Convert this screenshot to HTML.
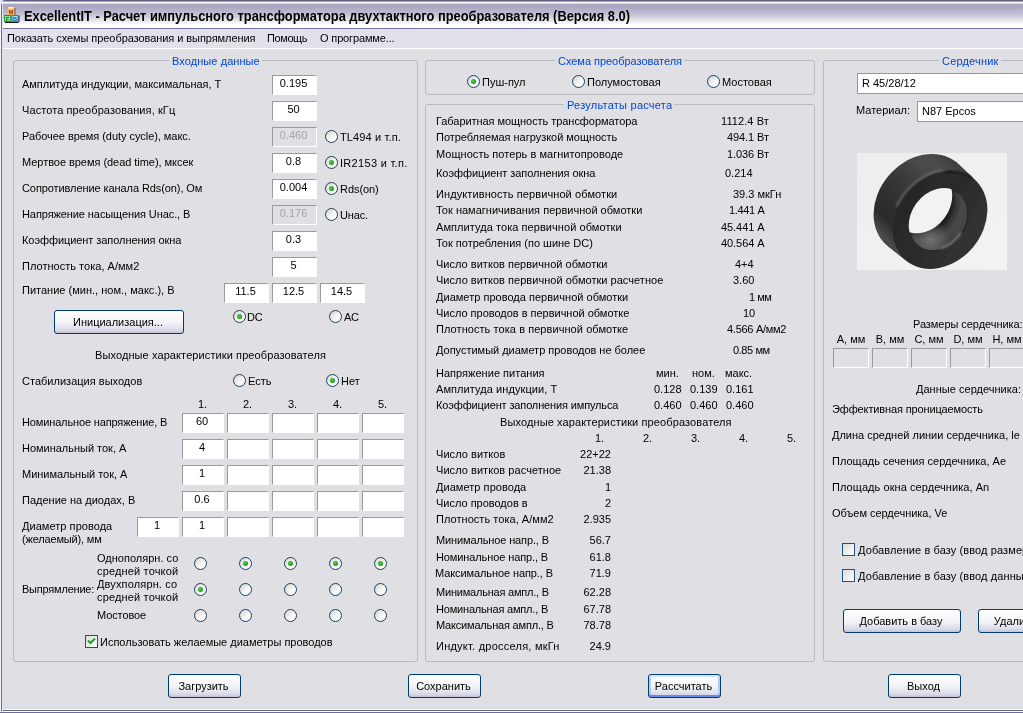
<!DOCTYPE html>
<html lang="ru"><head><meta charset="utf-8"><title>ExcellentIT</title>
<style>
html,body{margin:0;padding:0;}
body{width:1023px;height:713px;overflow:hidden;background:#e0dfe3;font-family:"Liberation Sans",sans-serif;font-size:11px;color:#000;}
#win{will-change:transform;position:relative;width:1023px;height:713px;overflow:hidden;background:#e0dfe3;}
#cornerbg{left:0;top:0;width:8px;height:8px;background:#e4e8f8;}
#win>div{position:absolute;box-sizing:border-box;}
.t{white-space:nowrap;line-height:13px;height:13px;}
.t.dis{color:#a0a0a0;}
#title{left:0;top:0;width:1023px;height:29px;border-top-left-radius:6px 5px;background:linear-gradient(to bottom,#5e5e80 0,#5e5e80 1px,#a4a4bc 1px,#a4a4bc 2px,#ffffff 2px,#ffffff 3px,#d4d4e4 3px,#d4d4e4 4px,#aeaec8 4px,#a6a6c2 6px,#b2b2c9 10px,#c5c5d6 15px,#dfdfe9 19.5px,#f7f7fa 23.5px,#ffffff 25px,#fdfdf8 28px,#74749c 28px,#74749c 29px);}
#ttext{left:24px;top:7px;font-weight:bold;font-size:14px;line-height:18px;white-space:nowrap;transform:scaleX(0.918);transform-origin:0 0;}
#menu{left:2px;top:29px;width:1021px;height:20px;background:#e0e1eb;border-bottom:1px solid #fff;}
#lb{z-index:2;left:0;top:4px;width:3px;height:707px;background:linear-gradient(to right,#f8f8fa 0,#f8f8fa 1px,#6c6c7c 1px,#6c6c7c 2px,#e4e4f0 2px,#e4e4f0 3px);}
#bb{left:0;top:704px;width:1023px;height:9px;background:linear-gradient(to bottom,#dddde8 0,#dddde8 1px,#e1e1da 1px,#e1e1da 2px,#dddde8 2px,#dddde8 4px,#e1e1da 4px,#e1e1da 5px,#f2f2f6 5px,#f2f2f6 6px,#66668a 6px,#66668a 7px,#ffffff 7px,#ffffff 8px,#6c6c94 8px,#6c6c94 9px);}
.grp{border:1px solid #b9b9c1;border-radius:3px;}
.gt{color:#0046d5;background:#e0dfe3;padding:0 2px 0 3px;white-space:nowrap;line-height:13px;height:13px;}
.inp{background:#fff;border:1px solid;border-color:#9a9a9c #fff #fff #9a9a9c;padding-right:2px;text-align:center;white-space:nowrap;overflow:hidden;}
.inp.dis{background:#e0dfe3;color:#a4a4a8;}
.inp.xp{border:1px solid #7f9db9;text-align:left;padding-left:4px;padding-top:1px;}
.rd{width:13px;height:13px;border-radius:50%;border:1px solid #1d3f62;background:linear-gradient(135deg,#d8d8d4 10%,#f6f6f4 55%,#ffffff 90%);}
.rd.on::after{content:"";position:absolute;left:3px;top:3px;width:5px;height:5px;border-radius:50%;background:radial-gradient(circle at 40% 40%,#55d045,#1c9a1c 70%);}
.cb{width:13px;height:13px;border:1px solid #1c5180;background:linear-gradient(135deg,#dcdcd7,#ffffff);}
.cb svg{position:absolute;left:-1px;top:-1px;}
.btn{padding-right:2px;border:1px solid #003c74;border-radius:3px;background:linear-gradient(to bottom,#ffffff 0,#f4f4f8 50%,#dcdce8 85%,#c4c4d8 100%);text-align:center;white-space:nowrap;}
.btn.foc{box-shadow:inset 0 2px 0 0 #cee7ff,inset 0 -2px 0 0 #6a8ce6,inset 2px 0 0 0 #b0cdf6,inset -2px 0 0 0 #b0cdf6;}

</style></head><body>
<div id="win">
<div id="cornerbg"></div>
<div id="title"></div>
<div id="iconw" style="left:0;top:0;width:24px;height:28px"><svg id="icon" width="16" height="16" viewBox="0 0 16 16" style="position:absolute;left:4px;top:7px"><rect x="3.5" y="0.5" width="7" height="7.5" fill="#f6a43c"/><rect x="4" y="0" width="6" height="1.6" fill="#ffe9b4"/><rect x="4.5" y="2" width="5" height="5.5" fill="#fbc070"/><rect x="10.5" y="1" width="1" height="7" fill="#7a5a20"/><rect x="0" y="8" width="7.5" height="7" fill="#169a3c"/><rect x="1" y="9" width="5.2" height="5" fill="#98e2a0"/><rect x="7.5" y="8" width="7" height="7" fill="#2484c4"/><rect x="8.5" y="9" width="5" height="5" fill="#a8e6f6"/><rect x="14.5" y="8.5" width="1" height="6.5" fill="#10284a"/><rect x="1" y="15" width="13.5" height="1" fill="#0c1a1a"/><g font-family="Liberation Sans, sans-serif" font-weight="bold" font-size="5.5" text-anchor="middle"><text x="7" y="6.8" fill="#a42408">M</text><text x="3.7" y="13.8" fill="#145c24">F</text><text x="11" y="13.8" fill="#1c48a8">B</text></g></svg></div>
<div id="ttext">ExcellentIT - Расчет импульсного трансформатора двухтактного преобразователя (Версия 8.0)</div>
<div id="menu"></div>
<div id="lb"></div>
<div id="bb"></div>
<div class="t " style="left:7px;top:32px;letter-spacing:-0.065px;">Показать схемы преобразования и выпрямления</div>
<div class="t " style="left:267px;top:32px;letter-spacing:-0.400px;">Помощь</div>
<div class="t " style="left:320px;top:32px;letter-spacing:-0.141px;">О программе...</div>
<div class="grp" style="left:13px;top:60px;width:405px;height:602px"></div>
<div class="gt" style="left:169px;top:55px;letter-spacing:0.075px;">Входные данные</div>
<div class="t " style="left:22px;top:78px;letter-spacing:-0.021px;">Амплитуда индукции, максимальная, Т</div>
<div class="inp " style="left:272px;top:75px;width:45px;height:20px;line-height:15px">0.195</div>
<div class="t " style="left:22px;top:104px;letter-spacing:0.093px;">Частота преобразования, кГц</div>
<div class="inp " style="left:272px;top:101px;width:45px;height:20px;line-height:15px">50</div>
<div class="t " style="left:22px;top:130px;letter-spacing:-0.051px;">Рабочее время (duty cycle), макс.</div>
<div class="inp dis" style="left:272px;top:127px;width:45px;height:20px;line-height:15px">0.460</div>
<div class="rd" style="left:325px;top:130px"></div>
<div class="t " style="left:340px;top:131px;letter-spacing:0.138px;">TL494 и т.п.</div>
<div class="t " style="left:22px;top:156px;letter-spacing:-0.043px;">Мертвое время (dead time), мксек</div>
<div class="inp " style="left:272px;top:153px;width:45px;height:20px;line-height:15px">0.8</div>
<div class="rd on" style="left:325px;top:156px"></div>
<div class="t " style="left:340px;top:157px;letter-spacing:0.306px;">IR2153 и т.п.</div>
<div class="t " style="left:22px;top:182px;letter-spacing:-0.085px;">Сопротивление канала Rds(on), Ом</div>
<div class="inp " style="left:272px;top:179px;width:45px;height:20px;line-height:15px">0.004</div>
<div class="rd on" style="left:325px;top:182px"></div>
<div class="t " style="left:340px;top:183px;letter-spacing:-0.061px;">Rds(on)</div>
<div class="t " style="left:22px;top:208px;letter-spacing:-0.088px;">Напряжение насыщения Uнас., В</div>
<div class="inp dis" style="left:272px;top:205px;width:45px;height:20px;line-height:15px">0.176</div>
<div class="rd" style="left:325px;top:208px"></div>
<div class="t " style="left:340px;top:209px;letter-spacing:-0.141px;">Uнас.</div>
<div class="t " style="left:22px;top:234px;letter-spacing:-0.066px;">Коэффициент заполнения окна</div>
<div class="inp " style="left:272px;top:231px;width:45px;height:20px;line-height:15px">0.3</div>
<div class="t " style="left:22px;top:260px;letter-spacing:0.022px;">Плотность тока, А/мм2</div>
<div class="inp " style="left:272px;top:257px;width:45px;height:20px;line-height:15px">5</div>
<div class="t " style="left:22px;top:284px;letter-spacing:0.010px;">Питание (мин., ном., макс.), В</div>
<div class="inp " style="left:224px;top:283px;width:45px;height:20px;line-height:15px">11.5</div>
<div class="inp " style="left:272px;top:283px;width:45px;height:20px;line-height:15px">12.5</div>
<div class="inp " style="left:320px;top:283px;width:45px;height:20px;line-height:15px">14.5</div>
<div class="btn " style="left:54px;top:310px;width:130px;height:24px;line-height:22px">Инициализация...</div>
<div class="rd on" style="left:233px;top:310px"></div>
<div class="t " style="left:247px;top:311px;letter-spacing:-0.295px;">DC</div>
<div class="rd" style="left:329px;top:310px"></div>
<div class="t " style="left:344px;top:311px;letter-spacing:-0.391px;">AC</div>
<div class="t " style="left:95px;top:349px;letter-spacing:0.099px;">Выходные характеристики преобразователя</div>
<div class="t " style="left:22px;top:375px;letter-spacing:0.015px;">Стабилизация выходов</div>
<div class="rd" style="left:233px;top:374px"></div>
<div class="t " style="left:248px;top:375px;">Есть</div>
<div class="rd on" style="left:326px;top:374px"></div>
<div class="t " style="left:341px;top:375px;">Нет</div>
<div class="t " style="left:181px;top:398px;width:43px;text-align:center;">1.</div>
<div class="t " style="left:226px;top:398px;width:43px;text-align:center;">2.</div>
<div class="t " style="left:271px;top:398px;width:43px;text-align:center;">3.</div>
<div class="t " style="left:316px;top:398px;width:43px;text-align:center;">4.</div>
<div class="t " style="left:361px;top:398px;width:43px;text-align:center;">5.</div>
<div class="t " style="left:22px;top:416px;letter-spacing:-0.142px;">Номинальное напряжение, В</div>
<div class="inp " style="left:182px;top:413px;width:42px;height:20px;line-height:15px">60</div>
<div class="inp " style="left:227px;top:413px;width:42px;height:20px;line-height:15px"></div>
<div class="inp " style="left:272px;top:413px;width:42px;height:20px;line-height:15px"></div>
<div class="inp " style="left:317px;top:413px;width:42px;height:20px;line-height:15px"></div>
<div class="inp " style="left:362px;top:413px;width:42px;height:20px;line-height:15px"></div>
<div class="t " style="left:22px;top:442px;letter-spacing:-0.016px;">Номинальный ток, А</div>
<div class="inp " style="left:182px;top:439px;width:42px;height:20px;line-height:15px">4</div>
<div class="inp " style="left:227px;top:439px;width:42px;height:20px;line-height:15px"></div>
<div class="inp " style="left:272px;top:439px;width:42px;height:20px;line-height:15px"></div>
<div class="inp " style="left:317px;top:439px;width:42px;height:20px;line-height:15px"></div>
<div class="inp " style="left:362px;top:439px;width:42px;height:20px;line-height:15px"></div>
<div class="t " style="left:22px;top:468px;letter-spacing:-0.030px;">Минимальный ток, А</div>
<div class="inp " style="left:182px;top:465px;width:42px;height:20px;line-height:15px">1</div>
<div class="inp " style="left:227px;top:465px;width:42px;height:20px;line-height:15px"></div>
<div class="inp " style="left:272px;top:465px;width:42px;height:20px;line-height:15px"></div>
<div class="inp " style="left:317px;top:465px;width:42px;height:20px;line-height:15px"></div>
<div class="inp " style="left:362px;top:465px;width:42px;height:20px;line-height:15px"></div>
<div class="t " style="left:22px;top:494px;letter-spacing:0.008px;">Падение на диодах, В</div>
<div class="inp " style="left:182px;top:491px;width:42px;height:20px;line-height:15px">0.6</div>
<div class="inp " style="left:227px;top:491px;width:42px;height:20px;line-height:15px"></div>
<div class="inp " style="left:272px;top:491px;width:42px;height:20px;line-height:15px"></div>
<div class="inp " style="left:317px;top:491px;width:42px;height:20px;line-height:15px"></div>
<div class="inp " style="left:362px;top:491px;width:42px;height:20px;line-height:15px"></div>
<div class="t " style="left:22px;top:520px;letter-spacing:0.048px;">Диаметр провода</div>
<div class="t " style="left:22px;top:533px;letter-spacing:-0.168px;">(желаемый), мм</div>
<div class="inp " style="left:137px;top:517px;width:42px;height:20px;line-height:15px">1</div>
<div class="inp " style="left:182px;top:517px;width:42px;height:20px;line-height:15px">1</div>
<div class="inp " style="left:227px;top:517px;width:42px;height:20px;line-height:15px"></div>
<div class="inp " style="left:272px;top:517px;width:42px;height:20px;line-height:15px"></div>
<div class="inp " style="left:317px;top:517px;width:42px;height:20px;line-height:15px"></div>
<div class="inp " style="left:362px;top:517px;width:42px;height:20px;line-height:15px"></div>
<div class="t " style="left:22px;top:583px;letter-spacing:-0.213px;">Выпрямление:</div>
<div class="t " style="left:97px;top:552px;letter-spacing:0.008px;">Однополярн. со</div>
<div class="t " style="left:97px;top:565px;letter-spacing:0.162px;">средней точкой</div>
<div class="t " style="left:97px;top:578px;letter-spacing:0.142px;">Двухполярн. со</div>
<div class="t " style="left:97px;top:591px;letter-spacing:0.162px;">средней точкой</div>
<div class="t " style="left:97px;top:609px;letter-spacing:-0.101px;">Мостовое</div>
<div class="rd" style="left:194px;top:557px"></div>
<div class="rd on" style="left:239px;top:557px"></div>
<div class="rd on" style="left:284px;top:557px"></div>
<div class="rd on" style="left:329px;top:557px"></div>
<div class="rd on" style="left:374px;top:557px"></div>
<div class="rd on" style="left:194px;top:583px"></div>
<div class="rd" style="left:239px;top:583px"></div>
<div class="rd" style="left:284px;top:583px"></div>
<div class="rd" style="left:329px;top:583px"></div>
<div class="rd" style="left:374px;top:583px"></div>
<div class="rd" style="left:194px;top:609px"></div>
<div class="rd" style="left:239px;top:609px"></div>
<div class="rd" style="left:284px;top:609px"></div>
<div class="rd" style="left:329px;top:609px"></div>
<div class="rd" style="left:374px;top:609px"></div>
<div class="cb on" style="left:85px;top:635px"><svg width="13" height="13" viewBox="0 0 13 13"><path d="M3 5.5 L5.5 8 L10 3.5" fill="none" stroke="#21a121" stroke-width="2"/></svg></div>
<div class="t " style="left:100px;top:636px;letter-spacing:0.001px;">Использовать желаемые диаметры проводов</div>
<div class="grp" style="left:425px;top:60px;width:390px;height:35px"></div>
<div class="gt" style="left:555px;top:55px;letter-spacing:-0.028px;">Схема преобразователя</div>
<div class="rd on" style="left:467px;top:75px"></div>
<div class="t " style="left:482px;top:76px;">Пуш-пул</div>
<div class="rd" style="left:572px;top:75px"></div>
<div class="t " style="left:587px;top:76px;">Полумостовая</div>
<div class="rd" style="left:707px;top:75px"></div>
<div class="t " style="left:722px;top:76px;">Мостовая</div>
<div class="grp" style="left:425px;top:104px;width:390px;height:558px"></div>
<div class="gt" style="left:564px;top:99px;letter-spacing:0.232px;">Результаты расчета</div>
<div class="t " style="left:436px;top:115px;letter-spacing:-0.056px;">Габаритная мощность трансформатора</div>
<div class="t " style="left:721px;top:115px;letter-spacing:0.091px;">1112.4 Вт</div>
<div class="t " style="left:436px;top:131px;letter-spacing:-0.027px;">Потребляемая нагрузкой мощность</div>
<div class="t " style="left:727px;top:131px;letter-spacing:-0.087px;">494.1 Вт</div>
<div class="t " style="left:436px;top:148px;letter-spacing:0.043px;">Мощность потерь в магнитопроводе</div>
<div class="t " style="left:727px;top:148px;letter-spacing:-0.087px;">1.036 Вт</div>
<div class="t " style="left:436px;top:167px;letter-spacing:-0.066px;">Коэффициент заполнения окна</div>
<div class="t " style="left:725px;top:167px;">0.214</div>
<div class="t " style="left:436px;top:188px;letter-spacing:0.097px;">Индуктивность первичной обмотки</div>
<div class="t " style="left:733px;top:188px;letter-spacing:0.004px;">39.3 мкГн</div>
<div class="t " style="left:436px;top:204px;letter-spacing:0.014px;">Ток намагничивания первичной обмотки</div>
<div class="t " style="left:729px;top:204px;letter-spacing:-0.332px;">1.441 А</div>
<div class="t " style="left:436px;top:221px;letter-spacing:0.066px;">Амплитуда тока первичной обмотки</div>
<div class="t " style="left:721px;top:221px;letter-spacing:-0.056px;">45.441 А</div>
<div class="t " style="left:436px;top:237px;letter-spacing:-0.006px;">Ток потребления (по шине DC)</div>
<div class="t " style="left:721px;top:237px;letter-spacing:-0.056px;">40.564 А</div>
<div class="t " style="left:436px;top:258px;letter-spacing:0.024px;">Число витков первичной обмотки</div>
<div class="t " style="left:735px;top:258px;">4+4</div>
<div class="t " style="left:436px;top:274px;letter-spacing:0.030px;">Число витков первичной обмотки расчетное</div>
<div class="t " style="left:733px;top:274px;">3.60</div>
<div class="t " style="left:436px;top:291px;letter-spacing:0.023px;">Диаметр провода первичной обмотки</div>
<div class="t " style="left:749px;top:291px;letter-spacing:-0.500px;">1 мм</div>
<div class="t " style="left:436px;top:307px;letter-spacing:-0.016px;">Число проводов в первичной обмотке</div>
<div class="t " style="left:743px;top:307px;">10</div>
<div class="t " style="left:436px;top:323px;letter-spacing:0.066px;">Плотность тока в первичной обмотке</div>
<div class="t " style="left:727px;top:323px;letter-spacing:-0.274px;">4.566 А/мм2</div>
<div class="t " style="left:436px;top:344px;letter-spacing:-0.016px;">Допустимый диаметр проводов не более</div>
<div class="t " style="left:733px;top:344px;letter-spacing:-0.413px;">0.85 мм</div>
<div class="t " style="left:436px;top:367px;letter-spacing:0.025px;">Напряжение питания</div>
<div class="t " style="left:656px;top:367px;">мин.</div>
<div class="t " style="left:692px;top:367px;">ном.</div>
<div class="t " style="left:725px;top:367px;">макс.</div>
<div class="t " style="left:436px;top:383px;letter-spacing:0.077px;">Амплитуда индукции, Т</div>
<div class="t " style="left:436px;top:399px;letter-spacing:-0.140px;">Коэффициент заполнения импульса</div>
<div class="t " style="left:654px;top:383px;">0.128</div>
<div class="t " style="left:654px;top:399px;">0.460</div>
<div class="t " style="left:690px;top:383px;">0.139</div>
<div class="t " style="left:690px;top:399px;">0.460</div>
<div class="t " style="left:726px;top:383px;">0.161</div>
<div class="t " style="left:726px;top:399px;">0.460</div>
<div class="t " style="left:500px;top:416px;letter-spacing:0.117px;">Выходные характеристики преобразователя</div>
<div class="t " style="left:595px;top:432px;">1.</div>
<div class="t " style="left:643px;top:432px;">2.</div>
<div class="t " style="left:691px;top:432px;">3.</div>
<div class="t " style="left:739px;top:432px;">4.</div>
<div class="t " style="left:787px;top:432px;">5.</div>
<div class="t " style="left:436px;top:448px;letter-spacing:0.056px;">Число витков</div>
<div class="t " style="left:561px;top:448px;width:50px;text-align:right;">22+22</div>
<div class="t " style="left:436px;top:464px;letter-spacing:0.053px;">Число витков расчетное</div>
<div class="t " style="left:561px;top:464px;width:50px;text-align:right;">21.38</div>
<div class="t " style="left:436px;top:481px;letter-spacing:0.048px;">Диаметр провода</div>
<div class="t " style="left:561px;top:481px;width:50px;text-align:right;">1</div>
<div class="t " style="left:436px;top:497px;letter-spacing:-0.010px;">Число проводов в</div>
<div class="t " style="left:561px;top:497px;width:50px;text-align:right;">2</div>
<div class="t " style="left:436px;top:513px;letter-spacing:0.041px;">Плотность тока, А/мм2</div>
<div class="t " style="left:561px;top:513px;width:50px;text-align:right;">2.935</div>
<div class="t " style="left:436px;top:534px;letter-spacing:-0.130px;">Минимальное напр., В</div>
<div class="t " style="left:561px;top:534px;width:50px;text-align:right;">56.7</div>
<div class="t " style="left:436px;top:551px;letter-spacing:-0.108px;">Номинальное напр., В</div>
<div class="t " style="left:561px;top:551px;width:50px;text-align:right;">61.8</div>
<div class="t " style="left:435px;top:567px;letter-spacing:-0.098px;">Максимальное напр., В</div>
<div class="t " style="left:561px;top:567px;width:50px;text-align:right;">71.9</div>
<div class="t " style="left:436px;top:586px;letter-spacing:-0.211px;">Минимальная ампл., В</div>
<div class="t " style="left:561px;top:586px;width:50px;text-align:right;">62.28</div>
<div class="t " style="left:436px;top:603px;letter-spacing:-0.190px;">Номинальная ампл., В</div>
<div class="t " style="left:561px;top:603px;width:50px;text-align:right;">67.78</div>
<div class="t " style="left:436px;top:619px;letter-spacing:-0.185px;">Максимальная ампл., В</div>
<div class="t " style="left:561px;top:619px;width:50px;text-align:right;">78.78</div>
<div class="t " style="left:436px;top:640px;letter-spacing:0.238px;">Индукт. дросселя, мкГн</div>
<div class="t " style="left:561px;top:640px;width:50px;text-align:right;">24.9</div>
<div class="grp" style="left:823px;top:60px;width:300px;height:602px"></div>
<div class="gt" style="left:939px;top:55px;letter-spacing:0.192px;">Сердечник</div>
<div class="inp xp" style="left:857px;top:73px;width:200px;height:21px;line-height:16px">R 45/28/12</div>
<div class="t " style="left:856px;top:104px;">Материал:</div>
<div class="inp xp" style="left:917px;top:101px;width:200px;height:21px;line-height:16px">N87 Epcos</div>
<div id="core" style="left:857px;top:153px;width:150px;height:117px"><svg width="150" height="117" viewBox="0 0 150 117"><defs><linearGradient id="cbg" x1="0" y1="0" x2="1" y2="1"><stop offset="0" stop-color="#ededed"/><stop offset="1" stop-color="#f3f3f3"/></linearGradient><linearGradient id="cside" gradientUnits="userSpaceOnUse" x1="15" y1="95" x2="100" y2="5"><stop offset="0" stop-color="#484848"/><stop offset="0.13" stop-color="#4a4a4a"/><stop offset="0.24" stop-color="#2c2c2c"/><stop offset="0.37" stop-color="#2e2e2e"/><stop offset="0.58" stop-color="#3a3a3a"/><stop offset="0.77" stop-color="#4a4a4a"/><stop offset="0.85" stop-color="#4c4c4c"/><stop offset="1" stop-color="#3a3a3a"/></linearGradient><linearGradient id="cface" gradientUnits="userSpaceOnUse" x1="40" y1="40" x2="125" y2="95"><stop offset="0" stop-color="#262626"/><stop offset="0.6" stop-color="#2d2d2d"/><stop offset="1" stop-color="#343434"/></linearGradient><radialGradient id="cwall" gradientUnits="userSpaceOnUse" cx="65.5" cy="48.7" r="52"><stop offset="0" stop-color="#161616"/><stop offset="0.55" stop-color="#1a1a1a"/><stop offset="0.64" stop-color="#343434"/><stop offset="0.76" stop-color="#484848"/><stop offset="1" stop-color="#404040"/></radialGradient><radialGradient id="cblob" gradientUnits="userSpaceOnUse" cx="73" cy="87" r="20"><stop offset="0" stop-color="#787878" stop-opacity="0.85"/><stop offset="1" stop-color="#787878" stop-opacity="0"/></radialGradient><clipPath id="chole"><path d="M101.200 39.367A33.6 27.5 -54 1 0 61.700 93.733A33.6 27.5 -54 1 0 101.200 39.367Z" /></clipPath><filter id="cblur" x="-10%" y="-10%" width="120%" height="120%"><feGaussianBlur stdDeviation="0.55"/></filter><filter id="cblur2" x="-20%" y="-20%" width="140%" height="140%"><feGaussianBlur stdDeviation="0.8"/></filter></defs><rect width="150" height="117" fill="url(#cbg)"/><g filter="url(#cblur)"><g fill="url(#cside)"><path d="M99.839 9.580A54.2 43.9 -50 1 0 30.161 92.620A54.2 43.9 -50 1 0 99.839 9.580Z" /><path d="M101.572 11.252A54.08 43.78 -50 1 0 32.048 94.108A54.08 43.78 -50 1 0 101.572 11.252Z" /><path d="M103.305 12.924A53.96 43.66 -50 1 0 33.935 95.596A53.96 43.66 -50 1 0 103.305 12.924Z" /><path d="M105.038 14.596A53.84 43.54 -50 1 0 35.822 97.084A53.84 43.54 -50 1 0 105.038 14.596Z" /><path d="M106.771 16.268A53.72 43.42 -50 1 0 37.709 98.572A53.72 43.42 -50 1 0 106.771 16.268Z" /><path d="M108.503 17.940A53.6 43.3 -50 1 0 39.597 100.060A53.6 43.3 -50 1 0 108.503 17.940Z" /><path d="M110.236 19.612A53.48 43.18 -50 1 0 41.484 101.548A53.48 43.18 -50 1 0 110.236 19.612Z" /><path d="M111.969 21.284A53.36 43.06 -50 1 0 43.371 103.036A53.36 43.06 -50 1 0 111.969 21.284Z" /><path d="M113.702 22.956A53.24 42.94 -50 1 0 45.258 104.524A53.24 42.94 -50 1 0 113.702 22.956Z" /><path d="M115.435 24.628A53.12 42.82 -50 1 0 47.145 106.012A53.12 42.82 -50 1 0 115.435 24.628Z" /></g><path d="M117.168 26.300A53.0 42.7 -50 1 0 49.032 107.500A53.0 42.7 -50 1 0 117.168 26.300Z" fill="url(#cface)"/><path d="M101.200 39.367A33.6 27.5 -54 1 0 61.700 93.733A33.6 27.5 -54 1 0 101.200 39.367Z" fill="url(#cwall)"/><path d="M101.200 39.367A33.6 27.5 -54 1 0 61.700 93.733A33.6 27.5 -54 1 0 101.200 39.367Z" fill="url(#cblob)"/><path d="M100.964 39.691A33.2 27.1 -54 1 0 61.936 93.409A33.2 27.1 -54 1 0 100.964 39.691Z" fill="none" stroke="#1c1c1c" stroke-width="0.9"/><g clip-path="url(#chole)"><path d="M85.200 21.467A33.6 27.5 -54 1 0 45.700 75.833A33.6 27.5 -54 1 0 85.200 21.467Z" fill="#f2f2f2"/></g></g><g fill="none" filter="url(#cblur2)"><path d="M39.4 53.7L41.7 49.1L44.3 44.6L47.4 40.3L50.7 36.3L54.4 32.6L58.3 29.1L62.5 26.1L66.8 23.4L71.3 21.2L75.9 19.3L80.6 18.0L85.2 17.1" stroke="#6a6a6a" stroke-width="1.6"/><path d="M88.2 18.7L90.6 18.5L93.0 18.4L95.4 18.5L97.7 18.7L100.0 19.0L102.3 19.4L104.5 20.0L106.6 20.8L108.7 21.6L110.7 22.6L112.7 23.7L114.5 24.9" stroke="#151515" stroke-width="1.4"/><path d="M103.8 80.0L102.6 81.9L101.3 83.6L99.8 85.3L98.3 86.8L96.7 88.3L95.0 89.7L93.3 91.0L91.5 92.1L89.7 93.2L87.8 94.1L85.9 94.9L84.0 95.5" stroke="#8c8c8c" stroke-width="1.5"/></g></svg></div>
<div class="t " style="left:913px;top:318px;letter-spacing:-0.053px;">Размеры сердечника:</div>
<div class="t " style="left:833px;top:333px;width:36px;text-align:center;">А, мм</div>
<div class="inp dis" style="left:833px;top:348px;width:36px;height:20px;line-height:15px"></div>
<div class="t " style="left:872px;top:333px;width:36px;text-align:center;">В, мм</div>
<div class="inp dis" style="left:872px;top:348px;width:36px;height:20px;line-height:15px"></div>
<div class="t " style="left:911px;top:333px;width:36px;text-align:center;">С, мм</div>
<div class="inp dis" style="left:911px;top:348px;width:36px;height:20px;line-height:15px"></div>
<div class="t " style="left:950px;top:333px;width:36px;text-align:center;">D, мм</div>
<div class="inp dis" style="left:950px;top:348px;width:36px;height:20px;line-height:15px"></div>
<div class="t " style="left:989px;top:333px;width:36px;text-align:center;">Н, мм</div>
<div class="inp dis" style="left:989px;top:348px;width:36px;height:20px;line-height:15px"></div>
<div class="t " style="left:916px;top:383px;letter-spacing:0.026px;">Данные сердечника:</div>
<div class="t " style="left:832px;top:403px;letter-spacing:-0.136px;">Эффективная проницаемость</div>
<div class="t " style="left:832px;top:429px;letter-spacing:-0.006px;">Длина средней линии сердечника, le</div>
<div class="t " style="left:832px;top:455px;letter-spacing:0.016px;">Площадь сечения сердечника, Ae</div>
<div class="t " style="left:832px;top:481px;letter-spacing:0.068px;">Площадь окна сердечника, An</div>
<div class="t " style="left:832px;top:507px;letter-spacing:-0.027px;">Объем сердечника, Ve</div>
<div class="cb" style="left:842px;top:543px"></div>
<div class="t " style="left:858px;top:544px;letter-spacing:0.1px">Добавление в базу (ввод размеров)</div>
<div class="cb" style="left:842px;top:569px"></div>
<div class="t " style="left:858px;top:570px;letter-spacing:0.1px">Добавление в базу (ввод данных)</div>
<div class="btn " style="left:843px;top:609px;width:118px;height:24px;line-height:22px">Добавить в базу</div>
<div class="btn " style="left:978px;top:609px;width:118px;height:24px;line-height:22px">Удалить из базы</div>
<div class="btn " style="left:168px;top:674px;width:73px;height:24px;line-height:22px">Загрузить</div>
<div class="btn " style="left:408px;top:674px;width:73px;height:24px;line-height:22px">Сохранить</div>
<div class="btn foc" style="left:648px;top:674px;width:73px;height:24px;line-height:22px">Рассчитать</div>
<div class="btn " style="left:888px;top:674px;width:73px;height:24px;line-height:22px">Выход</div>
</div>
</body></html>
